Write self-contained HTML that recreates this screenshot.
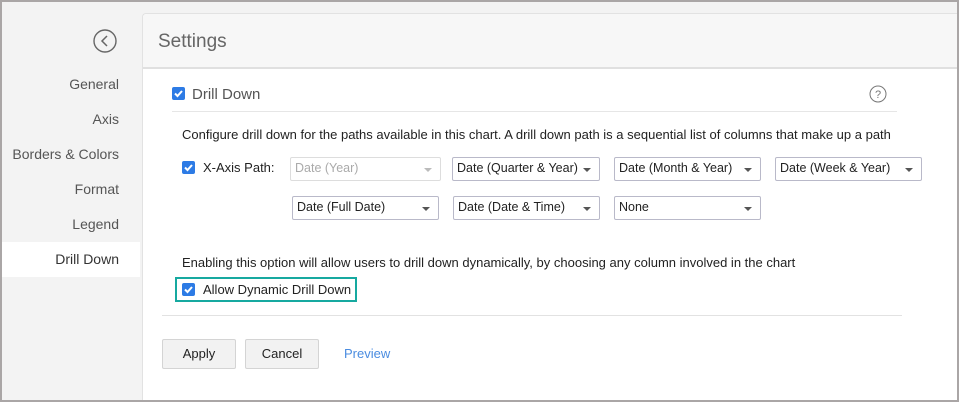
<!DOCTYPE html><html><head><style>
*{box-sizing:border-box;margin:0;padding:0}
body{width:959px;height:402px;overflow:hidden;font-family:"Liberation Sans",sans-serif;background:#f3f3f3;position:relative}
.frame{position:absolute;left:0;top:0;width:959px;height:402px;border:2px solid #aaa6a6;z-index:10;pointer-events:none}
.abs{position:absolute}
.nav{position:absolute;right:840px;font-size:14px;color:#555;text-align:right;white-space:nowrap}
.panel{position:absolute;left:142px;top:13px;right:0;bottom:0;background:#fff;border-left:1px solid #e2e2e2;border-top:1px solid #e2e2e2;border-top-left-radius:4px}
.hdr{position:absolute;left:0;right:0;top:0;height:55px;background:#f7f7f7;border-bottom:2px solid #e0e0e0;border-top-left-radius:4px}
.cb{position:absolute;width:13px;height:13px;background:#2d7be5;border-radius:2px}
.cb svg{position:absolute;left:1px;top:1px}
.sel{position:absolute;height:24px;border:1px solid #b9b9c9;border-radius:2px;font-size:12.5px;color:#222;padding:3px 0 0 4px;white-space:nowrap}
.sel:after{content:"";position:absolute;right:8px;top:10px;border-left:4px solid transparent;border-right:4px solid transparent;border-top:4px solid #555}
.sel.dis{color:#aaa;border-color:#ddd}
.sel.dis:after{border-top-color:#bbb}
.t{position:absolute;font-size:13px;color:#222;white-space:nowrap}
.btn{position:absolute;top:339px;width:74px;height:30px;background:#f2f2f2;border:1px solid #d4d4d4;border-radius:2px;font-size:13px;color:#222;text-align:center;line-height:28px}
</style></head><body>
<div class="frame"></div>
<svg class="abs" style="left:93px;top:29px" width="24" height="24"><circle cx="12" cy="12" r="11" fill="none" stroke="#666" stroke-width="1.4"/><path d="M14 7 L9 12 L14 17" fill="none" stroke="#666" stroke-width="1.5"/></svg>
<div class="nav" style="top:76px">General</div>
<div class="nav" style="top:111px">Axis</div>
<div class="nav" style="top:146px">Borders &amp; Colors</div>
<div class="nav" style="top:181px">Format</div>
<div class="nav" style="top:216px">Legend</div>
<div class="abs" style="left:2px;top:242px;width:138px;height:35px;background:#fff"></div>
<div class="nav" style="top:251px;color:#333">Drill Down</div>
<div class="panel"><div class="hdr"><div class="abs" style="left:15px;top:17px;font-size:19px;color:#666">Settings</div></div></div>
<div class="cb" style="left:172px;top:87px"><svg width="11" height="11"><path d="M2 5.5 L4.5 8 L9 3" fill="none" stroke="#fff" stroke-width="2"/></svg></div>
<div class="t" style="left:192px;top:86px;font-size:15px;color:#555">Drill Down</div>
<svg class="abs" style="left:869px;top:85px" width="18" height="18"><circle cx="9" cy="9" r="8" fill="none" stroke="#777" stroke-width="1"/><text x="9" y="13" font-size="11" text-anchor="middle" fill="#777" font-family="Liberation Sans">?</text></svg>
<div class="abs" style="left:172px;top:111px;width:725px;height:1px;background:#e6e6e6"></div>
<div class="t" style="left:182px;top:127px">Configure drill down for the paths available in this chart. A drill down path is a sequential list of columns that make up a path</div>
<div class="cb" style="left:182px;top:161px"><svg width="11" height="11"><path d="M2 5.5 L4.5 8 L9 3" fill="none" stroke="#fff" stroke-width="2"/></svg></div>
<div class="t" style="left:203px;top:160px">X-Axis Path:</div>
<div class="sel dis" style="left:290px;top:157px;width:151px">Date (Year)</div>
<div class="sel" style="left:452px;top:157px;width:148px">Date (Quarter &amp; Year)</div>
<div class="sel" style="left:614px;top:157px;width:147px">Date (Month &amp; Year)</div>
<div class="sel" style="left:775px;top:157px;width:147px">Date (Week &amp; Year)</div>
<div class="sel" style="left:292px;top:196px;width:147px">Date (Full Date)</div>
<div class="sel" style="left:453px;top:196px;width:147px">Date (Date &amp; Time)</div>
<div class="sel" style="left:614px;top:196px;width:147px">None</div>
<div class="t" style="left:182px;top:255px">Enabling this option will allow users to drill down dynamically, by choosing any column involved in the chart</div>
<div class="abs" style="left:175px;top:277px;width:182px;height:25px;border:2px solid #16a9a0"></div>
<div class="cb" style="left:182px;top:283px"><svg width="11" height="11"><path d="M2 5.5 L4.5 8 L9 3" fill="none" stroke="#fff" stroke-width="2"/></svg></div>
<div class="t" style="left:203px;top:282px">Allow Dynamic Drill Down</div>
<div class="abs" style="left:162px;top:315px;width:740px;height:1px;background:#e2e2e2"></div>
<div class="btn" style="left:162px">Apply</div>
<div class="btn" style="left:245px">Cancel</div>
<div class="t" style="left:344px;top:346px;color:#4a8ce0">Preview</div>
</body></html>
